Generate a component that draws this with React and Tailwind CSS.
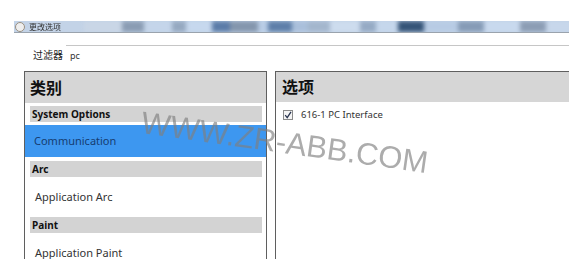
import React from "react";

const font = { fontFamily: '"Noto Sans", "Open Sans", "Noto Sans CJK SC", sans-serif' };

// blurred blobs of the title bar (taskbar behind the window in the screenshot)
const blobs = [
  { w: "w-[38px]", c: "bg-[#c9d6e6]" },
  { w: "w-[22px]", c: "bg-[#8a9cb3]" },
  { w: "w-[28px]", c: "bg-[#c4d5ea]" },
  { w: "w-[14px]", c: "bg-[#95a8c0]" },
  { w: "w-[26px]", c: "bg-[#c6d8ee]" },
  { w: "w-[18px]", c: "bg-[#5b7ca8]" },
  { w: "w-[28px]", c: "bg-[#8496ad]" },
  { w: "w-[10px]", c: "bg-[#b9cde6]" },
  { w: "w-[24px]", c: "bg-[#5e7fa9]" },
  { w: "w-[16px]", c: "bg-[#a9bfdb]" },
  { w: "w-[22px]", c: "bg-[#a3b6cd]" },
  { w: "w-[30px]", c: "bg-[#cddcee]" },
  { w: "w-[16px]", c: "bg-[#95aac4]" },
  { w: "w-[22px]", c: "bg-[#c5d7ec]" },
  { w: "w-[26px]", c: "bg-[#355478]" },
  { w: "w-[34px]", c: "bg-[#b7cbe4]" },
  { w: "w-[26px]", c: "bg-[#869bb6]" },
  { w: "w-[36px]", c: "bg-[#c8d9ee]" },
  { w: "w-[26px]", c: "bg-[#8c9db4]" },
  { w: "w-[28px]", c: "bg-[#c7d7eb]" },
  { w: "w-[16px]", c: "bg-[#8494ab]" },
];

const GroupBar = ({ children }) => (
  <div className="mx-[5px] mr-[4px] h-[16px] bg-[#d3d3d3] flex items-center px-[2px] text-[10px] font-bold text-[#111]">
    {children}
  </div>
);

export default function App() {
  return (
    <div className="w-[569px] h-[278px] bg-white overflow-hidden relative" style={font}>
      {/* blurred title bar */}
      <div className="pt-[21px] pl-[14px]">
        <div className="h-[12px] flex items-center bg-[#c3d3e7] border-b border-[#9aa3ad] overflow-hidden">
          <div className="flex items-center gap-[4px] pl-[1px] w-[70px] shrink-0 blur-[0.6px]">
            <span className="w-[10px] h-[10px] rounded-full border border-[#9a8f80] bg-[#eee]" />
            <span className="text-[8px] leading-none text-[#333]">更改选项</span>
          </div>
          <div className="flex h-full flex-1 blur-[2px]">
            {blobs.map((b, i) => (
              <div key={i} className={`${b.w} ${b.c} h-full shrink-0`} />
            ))}
          </div>
        </div>
      </div>

      {/* filter row */}
      <div className="mt-[12px] flex h-[22px]">
        <div className="w-[66px] shrink-0 pl-[33px] pt-[5px] text-[10px] leading-none text-[#222]">过滤器</div>
        <div className="flex-1 border-t border-[#c6c6c6] pt-[5px] pl-[4px] text-[9px] leading-none text-[#333]">pc</div>
      </div>

      {/* panels */}
      <div className="mt-[4px] h-[188px] overflow-hidden flex pl-[24px] gap-[8px]">
        <div className="w-[243px] h-[220px] shrink-0 border border-[#5f5f5f] bg-white">
          <div className="h-[31px] bg-[#d6d6d6] flex items-center pl-[5px] text-[16px] font-bold text-[#111]">类别</div>
          <div className="h-[3px]" />
          <GroupBar>System Options</GroupBar>
          <div className="h-[3px]" />
          <div className="h-[32px] bg-[#3d97f0] flex items-center pl-[9px] text-[11px] text-[#163d70]">Communication</div>
          <div className="h-[4px]" />
          <GroupBar>Arc</GroupBar>
          <div className="h-[40px] flex items-center pl-[10px] text-[11px] text-[#333]">Application Arc</div>
          <GroupBar>Paint</GroupBar>
          <div className="h-[40px] flex items-center pl-[10px] text-[11px] text-[#333]">Application Paint</div>
        </div>
        <div className="flex-1 h-[220px] border border-r-0 border-[#5f5f5f] bg-white">
          <div className="h-[30px] bg-[#d6d6d6] flex items-center pl-[6px] text-[16px] font-bold text-[#111]">选项</div>
          <div className="flex items-center pl-[7px] pt-[6px] gap-[8px]">
            <div className="w-[10px] h-[10px] border border-[#8a8a8a] bg-[#f4f4f4] flex items-center justify-center">
              <svg width="8" height="8" viewBox="0 0 8 8">
                <path d="M1.2 4.2 L3.2 6.6 L7 0.8" fill="none" stroke="#2a3550" strokeWidth="1.3" />
              </svg>
            </div>
            <span className="text-[9.5px] text-[#333]">616-1 PC Interface</span>
          </div>
        </div>
      </div>

      {/* watermark */}
      <div
        className="absolute left-[140px] top-[127px] rotate-[8deg] text-[31px] leading-none text-[#808080] opacity-65 whitespace-nowrap pointer-events-none"
        style={{ fontFamily: '"Liberation Sans", Arial, sans-serif' }}
      >
        WWW.ZR-ABB.COM
      </div>
    </div>
  );
}
